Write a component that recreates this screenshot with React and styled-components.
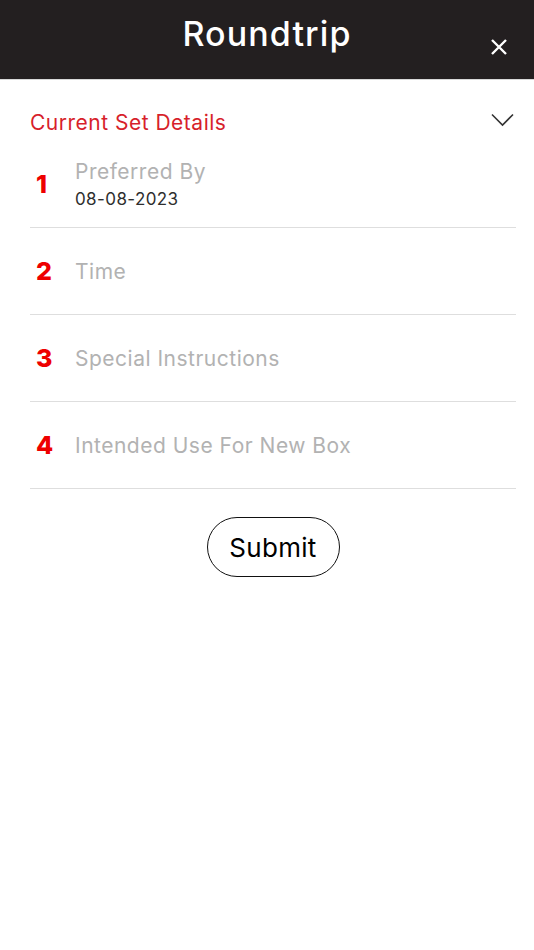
import React from "react";
import styled, { createGlobalStyle } from "styled-components";

const GlobalStyle = createGlobalStyle`
  html, body {
    margin: 0;
    padding: 0;
    background: #ffffff;
  }
  body {
    font-family: Inter, "Noto Sans", Roboto, sans-serif;
  }
`;

const Page = styled.div`
  width: 534px;
  min-height: 950px;
  background: #ffffff;
`;

const Header = styled.header`
  position: relative;
  height: 80px;
  background: #231f20;
  border-bottom: 1px solid #d8d8d8;
  box-sizing: border-box;
  display: flex;
  align-items: center;
  justify-content: center;
`;

const Title = styled.h1`
  margin: 0;
  padding-bottom: 13px;
  color: #ffffff;
  font-size: 34px;
  font-weight: 500;
  letter-spacing: 1.1px;
`;

const CloseButton = styled.button`
  position: absolute;
  right: 24px;
  top: 37px;
  width: 22px;
  height: 20px;
  padding: 0;
  border: none;
  background: none;
  display: flex;
  align-items: center;
  justify-content: center;
  cursor: pointer;
`;

const Content = styled.div`
  padding: 0 18px 0 30px;
`;

const SectionHeader = styled.div`
  display: flex;
  align-items: center;
  justify-content: space-between;
  padding: 30px 0 5px;
`;

const SectionTitle = styled.span`
  color: #d71f2b;
  font-size: 21px;
  line-height: 26px;
  font-weight: 400;
  letter-spacing: 0.5px;
`;

const Chevron = styled.span`
  display: flex;
  margin-right: 2px;
  margin-top: -6px;
`;

const Row = styled.div`
  display: flex;
  align-items: center;
  min-height: 86px;
  border-bottom: 1px solid #dedede;
`;

const Num = styled.span`
  width: 45px;
  padding-left: 6px;
  box-sizing: border-box;
  color: #ee0000;
  font-size: 25px;
  font-weight: 800;
  flex-shrink: 0;
`;

const Field = styled.div`
  display: flex;
  flex-direction: column;
  gap: 5px;
`;

const Label = styled.span`
  color: #b2b2b2;
  font-size: 21px;
  line-height: 25px;
  letter-spacing: 0.5px;
`;

const Value = styled.span`
  color: #2e2e2e;
  font-size: 17px;
  line-height: 20px;
  letter-spacing: 0.4px;
`;

const Actions = styled.div`
  display: flex;
  justify-content: center;
  padding-top: 28px;
`;

const SubmitButton = styled.button`
  width: 133px;
  height: 60px;
  border: 1.5px solid #111111;
  border-radius: 30px;
  background: #ffffff;
  color: #000000;
  font-family: inherit;
  font-size: 26px;
  font-weight: 400;
  letter-spacing: 0.3px;
  cursor: pointer;
`;

const fields = [
  { label: "Preferred By", value: "08-08-2023" },
  { label: "Time" },
  { label: "Special Instructions" },
  { label: "Intended Use For New Box" },
];

export default function App() {
  return (
    <Page>
      <GlobalStyle />
      <Header>
        <Title>Roundtrip</Title>
        <CloseButton aria-label="Close">
          <svg width="18" height="18" viewBox="0 0 18 18">
            <path d="M2 2 L16 16 M16 2 L2 16" stroke="#ffffff" strokeWidth="2.4" strokeLinecap="butt" />
          </svg>
        </CloseButton>
      </Header>
      <Content>
        <SectionHeader>
          <SectionTitle>Current Set Details</SectionTitle>
          <Chevron>
            <svg width="23" height="14" viewBox="0 0 23 14">
              <path d="M1 1.5 L11.5 12 L22 1.5" fill="none" stroke="#333333" strokeWidth="1.6" />
            </svg>
          </Chevron>
        </SectionHeader>
        {fields.map((f, i) => (
          <Row key={f.label}>
            <Num>{i + 1}</Num>
            <Field>
              <Label>{f.label}</Label>
              {f.value && <Value>{f.value}</Value>}
            </Field>
          </Row>
        ))}
        <Actions>
          <SubmitButton>Submit</SubmitButton>
        </Actions>
      </Content>
    </Page>
  );
}
